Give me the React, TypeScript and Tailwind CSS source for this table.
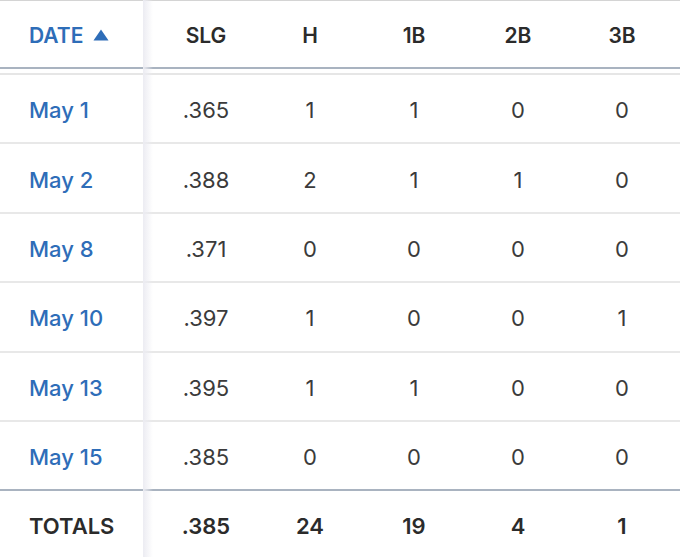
import React from "react";

const rows = [
  { d: "May 1", slg: ".365", h: "1", b1: "1", b2: "0", b3: "0" },
  { d: "May 2", slg: ".388", h: "2", b1: "1", b2: "1", b3: "0" },
  { d: "May 8", slg: ".371", h: "0", b1: "0", b2: "0", b3: "0" },
  { d: "May 10", slg: ".397", h: "1", b1: "0", b2: "0", b3: "1" },
  { d: "May 13", slg: ".395", h: "1", b1: "1", b2: "0", b3: "0" },
  { d: "May 15", slg: ".385", h: "0", b1: "0", b2: "0", b3: "0" },
];

function Num({ children, bold }: { children: React.ReactNode; bold?: boolean }) {
  return (
    <div
      className={
        "w-[104px] shrink-0 text-center " + (bold ? "font-semibold text-[#2b2b2b]" : "text-[#3b3b3b]")
      }
    >
      {children}
    </div>
  );
}

export default function App() {
  return (
    <div
      className="w-[680px] h-[557px] overflow-hidden bg-white relative"
      style={{ fontFamily: "Inter, 'Liberation Sans', sans-serif" }}
    >
      {/* header */}
      <div className="h-[75px] border-t border-[#d4d4d4] flex flex-col">
        <div className="h-[66px] pt-[4px] flex items-center text-[21px] font-semibold text-[#333]">
          <div className="w-[154px] shrink-0 pl-[29px] flex items-center gap-[10px] text-[#2e6db8]">
            DATE
            <svg width="16" height="12" viewBox="0 0 16 12" className="mb-[2px]">
              <path d="M8 0.5 L15.5 11.5 L0.5 11.5 Z" fill="#2e6db8" />
            </svg>
          </div>
          <Num bold>SLG</Num>
          <Num bold>H</Num>
          <Num bold>1B</Num>
          <Num bold>2B</Num>
          <Num bold>3B</Num>
        </div>
        <div className="h-[2px] bg-[#a9b3c0]" />
        <div className="h-[4px]" />
        <div className="h-[2px] bg-[#e6e6e6]" />
      </div>
      {/* rows */}
      {rows.map((r, i) => (
        <div
          key={r.d}
          className={
            "h-[69.4px] pt-[4px] flex items-center text-[22px] " +
            (i < rows.length - 1 ? "border-b-2 border-[#e8e8e8]" : "border-b-2 border-[#a9b3c0]")
          }
        >
          <div className="w-[154px] shrink-0 pl-[29px] text-[#2e6db8] font-medium">{r.d}</div>
          <Num>{r.slg}</Num>
          <Num>{r.h}</Num>
          <Num>{r.b1}</Num>
          <Num>{r.b2}</Num>
          <Num>{r.b3}</Num>
        </div>
      ))}
      {/* totals */}
      <div className="h-[66px] pt-[4px] flex items-center text-[22px] font-semibold text-[#2b2b2b]">
        <div className="w-[154px] shrink-0 pl-[29px]">TOTALS</div>
        <Num bold>.385</Num>
        <Num bold>24</Num>
        <Num bold>19</Num>
        <Num bold>4</Num>
        <Num bold>1</Num>
      </div>
      {/* sticky column shadow */}
      <div className="absolute top-0 bottom-0 left-[143px] w-[10px] bg-gradient-to-r from-[#ececf2] to-transparent" />
    </div>
  );
}
